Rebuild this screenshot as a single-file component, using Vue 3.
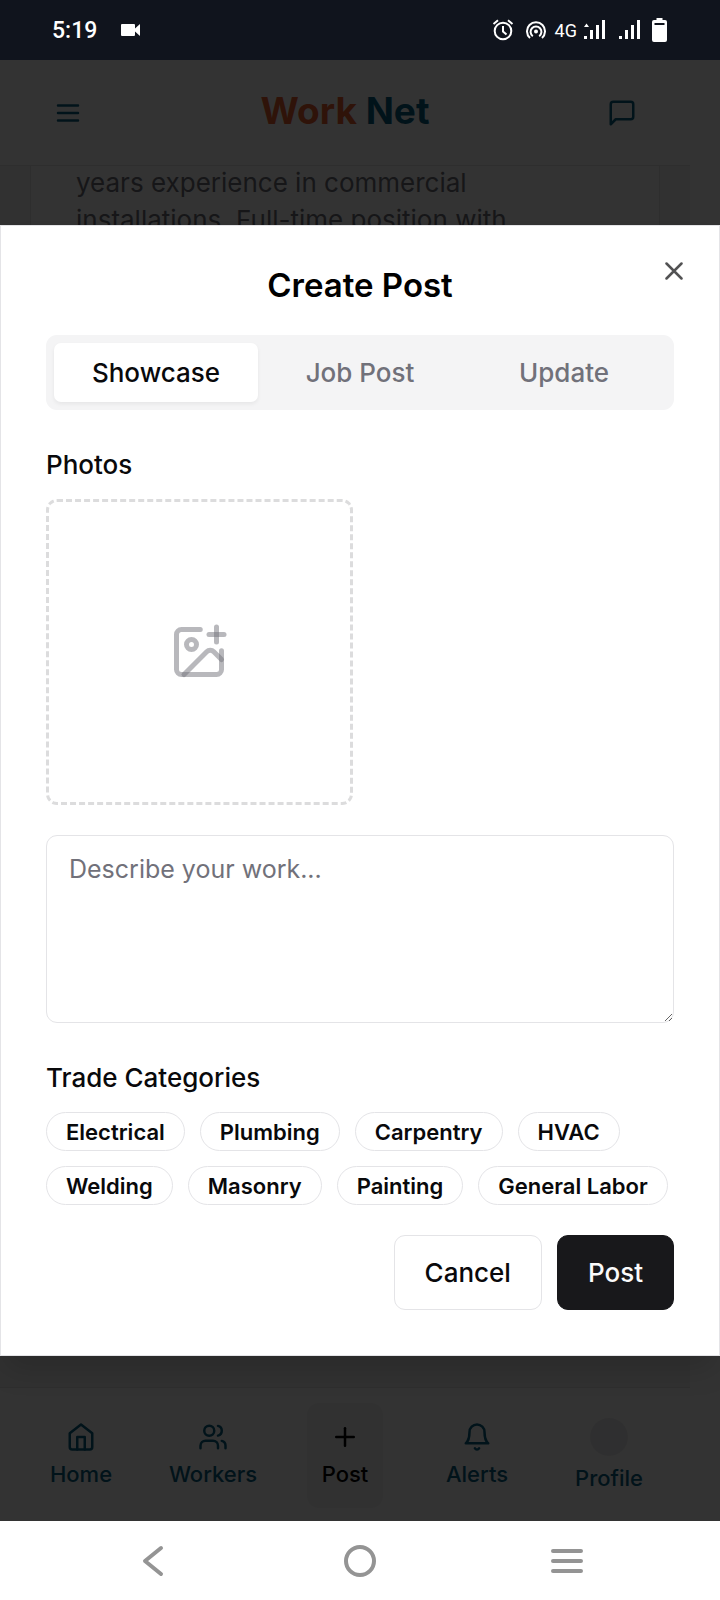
<script setup>
import { ref } from 'vue'

const tabs = ['Showcase', 'Job Post', 'Update']
const activeTab = ref('Showcase')
const description = ref('')
const selected = ref([])
const categories = [
  'Electrical', 'Plumbing', 'Carpentry', 'HVAC',
  'Welding', 'Masonry', 'Painting', 'General Labor',
]
const navItems = [
  { label: 'Home', paths: ['m3 9 9-7 9 7v11a2 2 0 0 1-2 2H5a2 2 0 0 1-2-2z', 'M9 22V12h6v10'] },
  { label: 'Workers', paths: ['M16 21v-2a4 4 0 0 0-4-4H6a4 4 0 0 0-4 4v2', 'M5 7a4 4 0 1 0 8 0a4 4 0 1 0-8 0', 'M22 21v-2a4 4 0 0 0-3-3.87', 'M16 3.13a4 4 0 0 1 0 7.75'] },
  { label: 'Post', paths: ['M5 12h14', 'M12 5v14'], current: true },
  { label: 'Alerts', paths: ['M6 8a6 6 0 0 1 12 0c0 7 3 9 3 9H3s3-2 3-9', 'M10.3 21a1.94 1.94 0 0 0 3.4 0'] },
  { label: 'Profile', avatar: true },
]

function toggle(name) {
  selected.value = selected.value.includes(name)
    ? selected.value.filter((n) => n !== name)
    : [...selected.value, name]
}
</script>

<template>
  <div class="device">
    <div class="status">
      <span class="clock">5:19</span>
      <svg class="camera" width="20" height="14" viewBox="0 0 20 14"><path d="M1 1h12q1 0 1 1v3.500l5-4.500v12l-5-4.500v3.500q0 1-1 1H1q-1 0-1-1V2q0-1 1-1z" fill="#fff" /></svg>
      <div class="status-right">
        <svg class="alarm" width="22" height="22" viewBox="0 0 22 22" fill="none" stroke="#fff" stroke-width="2"><circle cx="11" cy="12" r="8.300" /><path d="M11 7v5.500l3.500 3M1.500 5l4.500-3.700M20.500 5L16 1.300" /></svg>
        <svg class="hotspot" width="20" height="18" viewBox="0 0 20 18" fill="none" stroke="#fff" stroke-width="2"><circle cx="10" cy="10.500" r="2" fill="#fff" stroke="none" /><path d="M6.800 15.200a5.400 5.400 0 1 1 6.400 0M4 17a9 9 0 1 1 12 0" /></svg>
        <span class="network">4G</span>
        <svg class="signal-data" width="22" height="20" viewBox="0 0 22 20" fill="#fff"><path d="M0 16h3v3H0zM6 10h3v9H6zM12 5h3v14h-3zM18 0h3v19h-3zM0 7l2.500-3.500L5 7z" /></svg>
        <svg class="signal" width="22" height="20" viewBox="0 0 22 20" fill="#fff"><path d="M0 16h3v3H0zM6 10h3v9H6zM12 5h3v14h-3zM18 0h3v19h-3z" /></svg>
        <svg width="15" height="24" viewBox="0 0 15 24"><path d="M4.500 0h6v2H13q2 0 2 2v18q0 2-2 2H2q-2 0-2-2V4q0-2 2-2h2.500z" fill="#fff" /><path d="M2.500 5h10v2h-10z" fill="#10141d" /></svg>
      </div>
    </div>

    <div class="app">
      <div class="page">
        <header class="topbar">
          <button class="icon-button" aria-label="Menu"><svg class="icon" viewBox="0 0 24 24"><path d="M4 6h16M4 12h16M4 18h16" /></svg></button>
          <div class="brand"><span class="brand-work">Work</span> <span>Net</span></div>
          <button class="icon-button" aria-label="Messages"><svg class="icon" viewBox="0 0 24 24"><path d="M21 15a2 2 0 0 1-2 2H7l-4 4V5a2 2 0 0 1 2-2h14a2 2 0 0 1 2 2z" /></svg></button>
        </header>
        <main class="feed">
          <article class="job"><p>years experience in commercial<br>installations. Full-time position with</p></article>
        </main>
        <nav class="bottom-nav" aria-label="Main">
          <a v-for="item in navItems" :key="item.label" href="#" class="nav-item" :class="{ current: item.current }">
            <span v-if="item.avatar" class="avatar"></span>
            <svg v-else class="icon" viewBox="0 0 24 24"><path v-for="d in item.paths" :key="d" :d="d" /></svg>
            <span>{{ item.label }}</span>
          </a>
        </nav>
      </div>

      <div class="overlay">
        <form class="dialog" role="dialog" aria-labelledby="dialog-title" @submit.prevent>
          <button type="button" class="close" aria-label="Close"><svg class="icon" viewBox="0 0 24 24"><path d="M18 6 6 18M6 6l12 12" /></svg></button>
          <h2 id="dialog-title">Create Post</h2>
          <div class="tabs" role="tablist">
            <button v-for="tab in tabs" :key="tab" type="button" role="tab" class="tab" :class="{ active: tab === activeTab }" :aria-selected="tab === activeTab" @click="activeTab = tab">{{ tab }}</button>
          </div>

          <section class="field">
            <h3>Photos</h3>
            <div class="photos">
              <button type="button" class="add-photo" aria-label="Add photo">
                <svg class="photo-icon" viewBox="0 0 24 24"><path d="M16 5h6" /><path d="M19 2v6" /><path d="M21 11.500V19a2 2 0 0 1-2 2H5a2 2 0 0 1-2-2V5a2 2 0 0 1 2-2h7.500" /><path d="m21 15-3.086-3.086a2 2 0 0 0-2.828 0L6 21" /><circle cx="9" cy="9" r="2" /></svg>
              </button>
            </div>
          </section>

          <textarea v-model="description" class="description" aria-label="Description" placeholder="Describe your work..."></textarea>

          <section class="field">
            <h3>Trade Categories</h3>
            <div class="chips">
              <button v-for="name in categories" :key="name" type="button" class="chip" :class="{ chosen: selected.includes(name) }" :aria-pressed="selected.includes(name)" @click="toggle(name)">{{ name }}</button>
            </div>
          </section>

          <div class="actions">
            <button type="button" class="action">Cancel</button>
            <button type="submit" class="action primary">Post</button>
          </div>
        </form>
      </div>
    </div>

    <div class="system-nav">
      <button aria-label="Back"><svg width="34" height="34" viewBox="0 0 34 34"><path d="M25 4 9 17 25 30" /></svg></button>
      <button aria-label="Home screen"><svg width="34" height="34" viewBox="0 0 34 34"><circle cx="17" cy="17" r="14" /></svg></button>
      <button aria-label="Recent apps"><svg width="34" height="34" viewBox="0 0 34 34"><path d="M3 7h28M3 17h28M3 27h28" /></svg></button>
    </div>
  </div>
</template>

<style>
body {
  background: #fff;
}
</style>

<style scoped>
.device {
  min-height: 100vh;
  display: flex;
  flex-direction: column;
  font-family: Inter, "Liberation Sans", sans-serif;
  font-size: 26px;
  line-height: 37px;
  color: #09090b;
}
.device * {
  box-sizing: border-box;
}
button {
  font: inherit;
  color: inherit;
  background: none;
  border: 0;
  padding: 0;
  margin: 0;
  cursor: pointer;
}
.icon {
  display: block;
  width: 30px;
  height: 30px;
  fill: none;
  stroke: currentColor;
  stroke-width: 2;
  stroke-linecap: round;
  stroke-linejoin: round;
}

.status {
  height: 60px;
  padding: 0 53px 0 52px;
  display: flex;
  align-items: center;
  background: #10141d;
  color: #fff;
  font-family: Roboto, "Liberation Sans", sans-serif;
}
.clock {
  font-size: 23px;
  font-weight: 500;
}
.camera {
  margin-left: 24px;
}
.status-right {
  margin-left: auto;
  display: flex;
  align-items: center;
}
.hotspot {
  margin-left: 12px;
}
.network {
  margin: 0 7px 0 9px;
  font-size: 18px;
}
.signal {
  margin: 0 11px 0 13px;
}

.app {
  flex: 1;
  position: relative;
  display: flex;
  flex-direction: column;
  background: #fff;
}
.page {
  flex: 1;
  margin-right: 30px;
  display: flex;
  flex-direction: column;
  background: #f5f5f5;
  color: #086080;
}
.topbar {
  height: 106px;
  padding: 0 53px;
  display: flex;
  align-items: center;
  justify-content: space-between;
  background: #fff;
  border-bottom: 1px solid #e4e4e7;
}
.brand {
  padding-bottom: 4px;
  font-size: 37px;
  line-height: 50px;
  font-weight: 700;
}
.brand-work {
  color: #e85f30;
}
.feed {
  flex: 1;
  padding: 0 30px;
  display: flex;
  align-items: flex-start;
  overflow: hidden;
}
.job {
  flex: 1;
  margin-top: -3px;
  padding: 0 45px 45px;
  background: #fff;
  border: 1px solid #e4e4e7;
  color: #71717a;
}
.job p {
  margin: 0;
  white-space: nowrap;
}
.bottom-nav {
  padding: 15px;
  height: 134px;
  display: grid;
  grid-template-columns: repeat(5, 1fr);
  justify-items: center;
  align-items: start;
  background: #fff;
  border-top: 1px solid #e4e4e7;
}
.nav-item {
  min-width: 76px;
  height: 105px;
  padding: 19px 8px 0;
  border-radius: 12px;
  display: flex;
  flex-direction: column;
  align-items: center;
  gap: 7px;
  font-size: 22px;
  line-height: 30px;
  font-weight: 500;
  color: inherit;
  text-decoration: none;
}
.nav-item.current {
  background: #f4f4f5;
  color: #000;
}
.avatar {
  width: 38px;
  height: 38px;
  margin-top: -4px;
  border-radius: 50%;
  background: #ececee;
}

.overlay {
  position: absolute;
  inset: 0;
  display: flex;
  align-items: center;
  background: rgba(0, 0, 0, 0.8);
}
.dialog {
  position: relative;
  flex: 1;
  padding: 45px;
  display: flex;
  flex-direction: column;
  gap: 30px;
  background: #fff;
  border: 1px solid #e4e4e7;
  box-shadow: 0 18px 28px -6px rgba(0, 0, 0, 0.15);
}
.close {
  position: absolute;
  top: 30px;
  right: 30px;
  opacity: 0.7;
}
h2 {
  margin: 0 0 6px;
  text-align: center;
  font-size: 33px;
  line-height: 28px;
  font-weight: 600;
  color: #000;
}
.tabs {
  height: 75px;
  padding: 8px;
  display: grid;
  grid-template-columns: repeat(3, 1fr);
  border-radius: 11px;
  background: #f4f4f5;
  font-weight: 500;
  color: #71717a;
}
.tab.active {
  background: #fff;
  border-radius: 7px;
  color: #09090b;
  box-shadow: 0 2px 4px rgba(0, 0, 0, 0.06);
}
.field {
  padding-top: 6px;
  display: flex;
  flex-direction: column;
}
h3 {
  margin: 0 0 16px;
  font-size: 26px;
  line-height: 37px;
  font-weight: 500;
}
.photos {
  display: grid;
  grid-template-columns: repeat(2, 1fr);
  gap: 15px;
}
.add-photo {
  aspect-ratio: 1;
  display: flex;
  align-items: center;
  justify-content: center;
  border: 3px dashed #dcdcdd;
  border-radius: 11px;
}
.photo-icon {
  width: 60px;
  height: 60px;
  fill: none;
  stroke: #71717a;
  stroke-opacity: 0.5;
  stroke-width: 2;
  stroke-linecap: round;
  stroke-linejoin: round;
}
.description {
  display: block;
  width: 100%;
  height: 188px;
  padding: 15px 22px;
  border: 1px solid #e4e4e7;
  border-radius: 11px;
  background: #fff;
  font: inherit;
  font-size: 25px;
  color: inherit;
  resize: vertical;
}
.description::placeholder {
  color: #71717a;
  opacity: 1;
}
.chips {
  display: flex;
  flex-wrap: wrap;
  gap: 15px;
}
.chip {
  height: 39px;
  padding: 0 19px;
  border: 1px solid #e4e4e7;
  border-radius: 20px;
  font-size: 22px;
  line-height: 30px;
  font-weight: 600;
}
.chip.chosen {
  background: #18181b;
  color: #fafafa;
}
.actions {
  display: flex;
  justify-content: flex-end;
  gap: 15px;
}
.action {
  height: 75px;
  padding: 0 30px;
  border: 1px solid #e4e4e7;
  border-radius: 11px;
  font-weight: 500;
}
.action.primary {
  border-color: #18181b;
  background: #18181b;
  color: #fafafa;
}

.system-nav {
  height: 79px;
  padding: 0 50px;
  display: grid;
  grid-template-columns: repeat(3, 1fr);
  place-items: center;
  background: #fff;
}
.system-nav svg {
  display: block;
  fill: none;
  stroke: #949494;
  stroke-width: 4;
  stroke-linecap: round;
  stroke-linejoin: round;
}
</style>
